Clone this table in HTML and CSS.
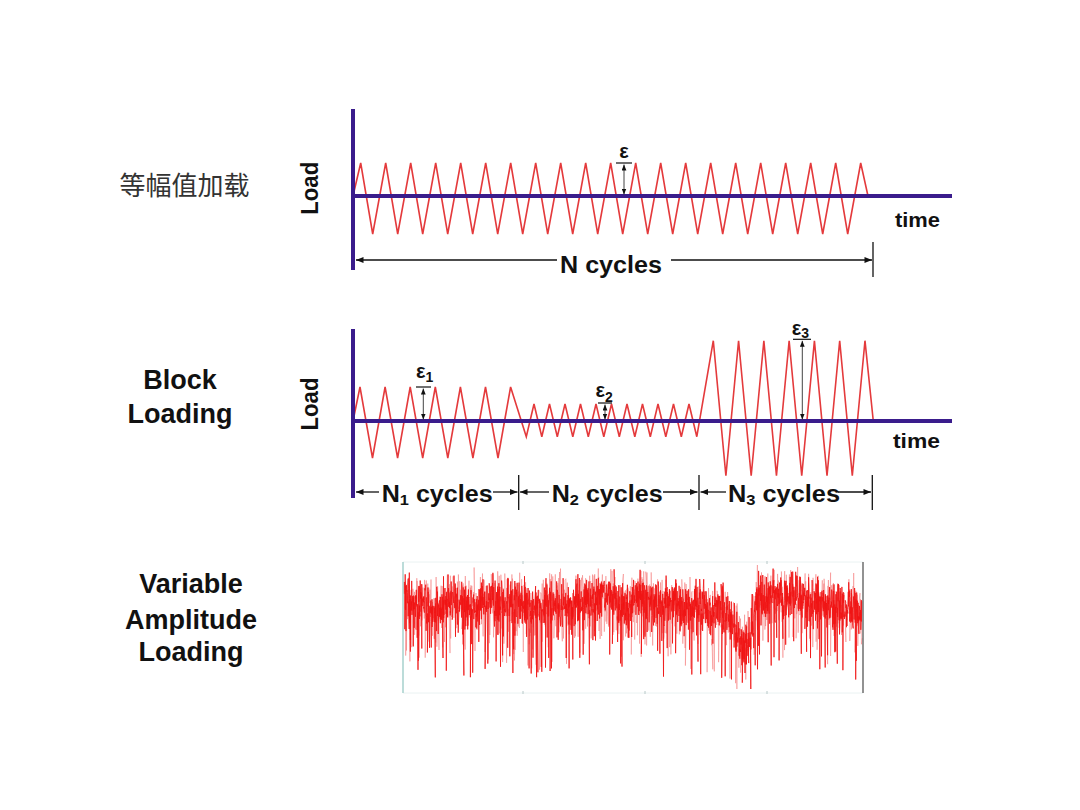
FILE: index.html
```html
<!DOCTYPE html>
<html lang="zh">
<head>
<meta charset="utf-8">
<title>Loading types</title>
<link rel="stylesheet" href="styles.css">
</head>
<body>
<main class="slide">
  <section class="row row-const">
    <div class="label label-cn">等幅值加载</div>
    <svg class="chart" width="680" height="185" viewBox="0 0 680 185">
      <defs>
        <marker id="ah" viewBox="0 0 10 8" refX="10" refY="4" markerWidth="9" markerHeight="6" markerUnits="userSpaceOnUse" orient="auto-start-reverse"><path d="M0,0L10,4L0,8z" fill="#111"/></marker>
        <marker id="ahs" viewBox="0 0 10 8" refX="10" refY="4" markerWidth="6" markerHeight="5" markerUnits="userSpaceOnUse" orient="auto-start-reverse"><path d="M0,0L10,4L0,8z" fill="#111"/></marker>
      </defs>
      <path class="wave" d="M63,96L70.7,63l12,71l13,-71l12,71l13,-71l12,71l13,-71l12,71l13,-71l12,71l13,-71l12,71l13,-71l12,71l13,-71l12,71l13,-71l12,71l13,-71l12,71l13,-71l12,71l13,-71l12,71l13,-71l12,71l13,-71l12,71l13,-71l12,71l13,-71l12,71l13,-71l12,71l13,-71l12,71l13,-71l12,71l13,-71l12,71l13,-71l7.3,33"/>
      <line class="axis" x1="63" y1="96" x2="662" y2="96"/>
      <line class="axis" x1="63" y1="9" x2="63" y2="170"/>
      <text class="t t-load" transform="translate(28.3,88.3) rotate(-90)" text-anchor="middle" textLength="53" lengthAdjust="spacingAndGlyphs">Load</text>
      <line class="tick" x1="326" y1="63" x2="342" y2="63"/>
      <line class="shaft" x1="334" y1="64.5" x2="334" y2="94.5" marker-start="url(#ahs)" marker-end="url(#ahs)"/>
      <text class="t t-eps" x="334" y="57.5" text-anchor="middle">ε</text>
      <text class="t t-time" x="605" y="126.7" textLength="45" lengthAdjust="spacingAndGlyphs">time</text>
      <line class="dim" x1="66" y1="160" x2="267" y2="160" marker-start="url(#ah)"/>
      <text class="t t-cyc" x="270" y="173.3" textLength="102" lengthAdjust="spacingAndGlyphs">N cycles</text>
      <line class="dim" x1="381" y1="160" x2="582" y2="160" marker-end="url(#ah)"/>
      <line class="dim" x1="583" y1="142" x2="583" y2="177"/>
    </svg>
  </section>

  <section class="row row-block">
    <div class="label label-block"><div>Block</div><div>Loading</div></div>
    <svg class="chart" width="680" height="195" viewBox="0 0 680 195">
      <path class="wave" d="M63,101L70,67l12.5,71l12.6,-71l12.5,71l12.6,-71l12.5,71l12.6,-71l12.5,71l12.6,-71l12.5,71l12.6,-71l12.5,71l12.6,-71l15.7,49.7l7.7,-32.7l7.8,32.7l7.7,-32.7l7.8,32.7l7.7,-32.7l7.8,32.7l7.7,-32.7l7.8,32.7l7.7,-32.7l7.8,32.7l7.7,-32.7l7.8,32.7l7.7,-32.7l7.8,32.7l7.7,-32.7l7.8,32.7l7.7,-32.7l7.8,32.7l7.7,-32.7l7.8,32.7l7.7,-32.7l7.8,32.7l16.5,-96l12.6,135l12.68,-135l12.6,135l12.68,-135l12.6,135l12.68,-135l12.6,135l12.68,-135l12.6,135l12.68,-135l12.6,135l12.68,-135l8.3,80.3"/>
      <line class="axis" x1="63" y1="101" x2="662" y2="101"/>
      <line class="axis" x1="63" y1="9" x2="63" y2="178"/>
      <text class="t t-load" transform="translate(28.3,84) rotate(-90)" text-anchor="middle" textLength="53" lengthAdjust="spacingAndGlyphs">Load</text>

      <line class="tick" x1="126" y1="67" x2="141" y2="67"/>
      <line class="shaft" x1="133.3" y1="68.5" x2="133.3" y2="99.5" marker-start="url(#ahs)" marker-end="url(#ahs)"/>
      <text class="t t-eps" x="126" y="58.3">ε<tspan class="t-sub" dy="3.4">1</tspan></text>

      <line class="tick" x1="308" y1="83" x2="322" y2="83"/>
      <line class="shaft" x1="315" y1="84.5" x2="315" y2="99.5" marker-start="url(#ahs)" marker-end="url(#ahs)"/>
      <text class="t t-eps" x="305.5" y="77.3">ε<tspan class="t-sub" dy="4.4">2</tspan></text>

      <line class="tick" x1="503" y1="19.3" x2="521" y2="19.3"/>
      <line class="shaft" x1="512.3" y1="20.8" x2="512.3" y2="99.5" marker-start="url(#ahs)" marker-end="url(#ahs)"/>
      <text class="t t-eps" x="501.7" y="15">ε<tspan class="t-sub" dy="3.3">3</tspan></text>

      <text class="t t-time" x="603" y="128.3" textLength="47" lengthAdjust="spacingAndGlyphs">time</text>

      <line class="dim" x1="66" y1="172" x2="89" y2="172" marker-start="url(#ah)"/>
      <text class="t t-ncyc" x="91.7" y="182" textLength="111" lengthAdjust="spacingAndGlyphs">N<tspan class="t-nsub" dy="3">1</tspan><tspan dy="-3"> cycles</tspan></text>
      <line class="dim" x1="203" y1="172" x2="227.5" y2="172" marker-end="url(#ah)"/>
      <line class="dim" x1="228.7" y1="155" x2="228.7" y2="190"/>
      <line class="dim" x1="230" y1="172" x2="259" y2="172" marker-start="url(#ah)"/>
      <text class="t t-ncyc" x="261.7" y="182" textLength="111" lengthAdjust="spacingAndGlyphs">N<tspan class="t-nsub" dy="3">2</tspan><tspan dy="-3"> cycles</tspan></text>
      <line class="dim" x1="373" y1="172" x2="407.5" y2="172" marker-end="url(#ah)"/>
      <line class="dim" x1="409" y1="155" x2="409" y2="190"/>
      <line class="dim" x1="410.5" y1="172" x2="436" y2="172" marker-start="url(#ah)"/>
      <text class="t t-ncyc" x="438" y="182" textLength="112" lengthAdjust="spacingAndGlyphs">N<tspan class="t-nsub" dy="3">3</tspan><tspan dy="-3"> cycles</tspan></text>
      <line class="dim" x1="548" y1="172" x2="581" y2="172" marker-end="url(#ah)"/>
      <line class="dim" x1="582.3" y1="155" x2="582.3" y2="190"/>
    </svg>
  </section>

  <section class="row row-var">
    <div class="label label-var">
      <div class="l1">Variable</div>
      <div class="l2">Amplitude</div>
      <div class="l3">Loading</div>
    </div>
    <svg class="chart" width="680" height="145" viewBox="0 0 680 145">
      <line class="frame-faint" x1="113" y1="7" x2="573" y2="7"/>
      <line class="frame-faint" x1="113" y1="138" x2="573" y2="138"/>
      <line class="frame-dot" x1="233" y1="6" x2="233" y2="9"/>
      <line class="frame-dot" x1="355" y1="6" x2="355" y2="9"/>
      <line class="frame-dot" x1="477" y1="6" x2="477" y2="9"/>
      <line class="frame-dot" x1="233" y1="136" x2="233" y2="139"/>
      <line class="frame-dot" x1="355" y1="136" x2="355" y2="139"/>
      <line class="frame-dot" x1="477" y1="136" x2="477" y2="139"/>
      <path id="noise-haze" class="noise-haze" d=""/>
      <path id="noise" class="noise" d=""/>
      <line class="frame-left" x1="113" y1="7" x2="113" y2="138"/>
      <line class="frame-right" x1="573" y1="7" x2="573" y2="138"/>
    </svg>
  </section>
</main>
<script src="script.js"></script>
</body>
</html>
```

FILE: styles.css
```css
html, body {
  margin: 0;
  background: #ffffff;
}

.slide {
  width: 1080px;
  height: 810px;
  box-sizing: border-box;
  padding: 100px 0 0 90px;
  font-family: "Liberation Sans", Arial, sans-serif;
  color: #111;
  overflow: hidden;
}

.row {
  display: flex;
  align-items: flex-start;
}

.row-block { margin-top: 35px; }
.row-var { margin-top: 40px; }

.label {
  width: 200px;
  flex: none;
  box-sizing: border-box;
  text-align: center;
}

.label-cn {
  padding: 71px 11px 0 0;
  font-family: "Noto Sans CJK SC", sans-serif;
  font-size: 26px;
  line-height: 26px;
  color: #333;
}

.label-block {
  padding: 42.6px 20px 0 0;
  font-weight: bold;
  font-size: 27px;
  line-height: 34px;
}

.label-var {
  padding: 8.6px 0 0 2px;
  font-weight: bold;
  font-size: 27px;
}

.label-var .l1 { line-height: 40px; }
.label-var .l2,
.label-var .l3 { line-height: 32px; }

.chart {
  display: block;
  flex: none;
  overflow: visible;
}

.wave {
  fill: none;
  stroke: #e43a3c;
  stroke-width: 1.6;
  stroke-linejoin: miter;
}

.axis {
  stroke: #3a1c8c;
  stroke-width: 4;
}

.tick {
  stroke: #111;
  stroke-width: 1.2;
}

.shaft {
  stroke: #444;
  stroke-width: 1;
}

.dim {
  stroke: #111;
  stroke-width: 1.3;
}

.t {
  font-family: "Liberation Sans", Arial, sans-serif;
  font-weight: bold;
  fill: #111;
}

.t-load { font-size: 23px; }
.t-time { font-size: 21px; }
.t-cyc { font-size: 23px; }
.t-ncyc { font-size: 23px; }
.t-nsub { font-size: 15px; }
.t-eps { font-size: 20px; }
.t-sub { font-size: 14px; }

.noise {
  fill: none;
  stroke: #f01414;
  stroke-width: 0.9;
  stroke-opacity: 0.9;
}

.noise-haze {
  fill: none;
  stroke: #f36a6a;
  stroke-width: 0.8;
  stroke-opacity: 0.55;
}

.frame-faint {
  stroke: #eaf2f2;
  stroke-width: 1;
}

.frame-dot {
  stroke: #b8c8c8;
  stroke-width: 1;
}

.frame-left {
  stroke: #a6d0cc;
  stroke-width: 1.5;
}

.frame-right {
  stroke: #6e6e6e;
  stroke-width: 1.5;
}
```

FILE: script.js
```js
(function () {
  var s = 20240611;
  function rnd() {
    s |= 0; s = (s + 0x6D2B79F5) | 0;
    var t = Math.imul(s ^ (s >>> 15), 1 | s);
    t = (t + Math.imul(t ^ (t >>> 7), 61 | t)) ^ t;
    return ((t ^ (t >>> 14)) >>> 0) / 4294967296;
  }
  var anchors = [[113, 38], [118, 46], [126, 52], [135, 48], [145, 58], [155, 50], [170, 46],
    [185, 52], [200, 44], [215, 50], [230, 46], [245, 54], [260, 47], [275, 52], [290, 44],
    [305, 46], [320, 42], [335, 50], [350, 44], [365, 52], [380, 48], [395, 54], [410, 50],
    [420, 58], [432, 54], [440, 66], [448, 82], [455, 92], [461, 74], [467, 44], [480, 40],
    [495, 44], [510, 42], [525, 50], [540, 46], [555, 54], [565, 52], [573, 60]];
  function mean(x) {
    for (var i = 1; i < anchors.length; i++) {
      if (x <= anchors[i][0]) {
        var a = anchors[i - 1], b = anchors[i];
        var t = (x - a[0]) / (b[0] - a[0]);
        return a[1] + (b[1] - a[1]) * t;
      }
    }
    return anchors[anchors.length - 1][1];
  }
  function build(n, spikeDown, spikeUp, spread, depth) {
    var d = [], x0 = 114, x1 = 572;
    for (var i = 0; i <= n; i++) {
      var x = x0 + (x1 - x0) * i / n + (rnd() - 0.5) * 0.6;
      var m = mean(x);
      var r = rnd();
      var y;
      if (r < spikeDown) y = m + 18 + rnd() * depth;
      else if (r < spikeDown + spikeUp) y = m - 10 - rnd() * 20;
      else y = m + (rnd() + rnd() + rnd() - 1.5) * spread;
      y = Math.max(10, Math.min(134, y));
      d.push((i ? 'L' : 'M') + x.toFixed(1) + ',' + y.toFixed(1));
    }
    return d.join('');
  }
  document.getElementById('noise-haze').setAttribute('d', build(1400, 0.08, 0.05, 30, 45));
  document.getElementById('noise').setAttribute('d', build(2200, 0.06, 0.04, 20, 55));
})();
```
